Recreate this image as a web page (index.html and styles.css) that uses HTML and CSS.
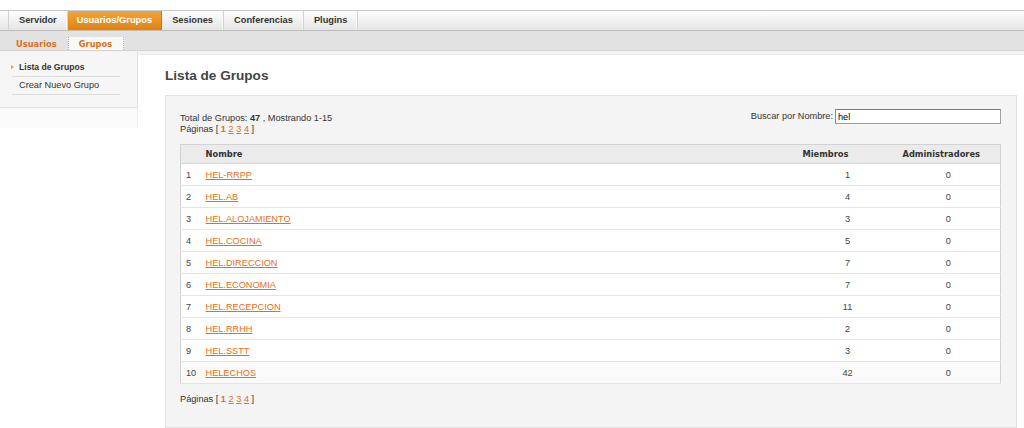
FILE: index.html
```html
<!DOCTYPE html>
<html lang="es">
<head>
<meta charset="utf-8">
<title>Lista de Grupos</title>
<link rel="stylesheet" href="styles.css">
</head>
<body>
<nav class="topnav">
  <a class="tab first">Servidor</a>
  <a class="tab active">Usuarios/Grupos</a>
  <a class="tab">Sesiones</a>
  <a class="tab">Conferencias</a>
  <a class="tab">Plugins</a>
</nav>
<nav class="subnav">
  <a class="subtab">Usuarios</a>
  <a class="subtab active">Grupos</a>
</nav>
<div class="layout">
  <aside class="side">
    <div class="sidebox">
      <ul class="sidemenu">
        <li class="current">Lista de Grupos</li>
        <li>Crear Nuevo Grupo</li>
      </ul>
    </div>
    <div class="sidefoot"></div>
  </aside>
  <main class="main">
    <h1 class="title">Lista de Grupos</h1>
    <div class="panel">
      <div class="toprow">
        <div class="info">
          <div>Total de Grupos: <b>47</b> , Mostrando 1-15</div>
          <div>Páginas [ <b class="cur">1</b> <a class="lnk">2</a> <a class="lnk">3</a> <a class="lnk">4</a> ]</div>
        </div>
        <form class="search">
          <label for="q">Buscar por Nombre:</label>
          <input id="q" type="text" value="hel">
        </form>
      </div>
      <table class="grid">
        <colgroup>
          <col class="c1"><col class="c2"><col class="c3"><col class="c4">
        </colgroup>
        <thead>
          <tr><th></th><th>Nombre</th><th class="mem">Miembros</th><th class="adm">Administradores</th></tr>
        </thead>
        <tbody>
          <tr><td>1</td><td><a class="lnk">HEL-RRPP</a></td><td class="mem">1</td><td class="adm">0</td></tr>
          <tr><td>2</td><td><a class="lnk">HEL.AB</a></td><td class="mem">4</td><td class="adm">0</td></tr>
          <tr><td>3</td><td><a class="lnk">HEL.ALOJAMIENTO</a></td><td class="mem">3</td><td class="adm">0</td></tr>
          <tr><td>4</td><td><a class="lnk">HEL.COCINA</a></td><td class="mem">5</td><td class="adm">0</td></tr>
          <tr><td>5</td><td><a class="lnk">HEL.DIRECCION</a></td><td class="mem">7</td><td class="adm">0</td></tr>
          <tr><td>6</td><td><a class="lnk">HEL.ECONOMIA</a></td><td class="mem">7</td><td class="adm">0</td></tr>
          <tr><td>7</td><td><a class="lnk">HEL.RECEPCION</a></td><td class="mem">11</td><td class="adm">0</td></tr>
          <tr><td>8</td><td><a class="lnk">HEL.RRHH</a></td><td class="mem">2</td><td class="adm">0</td></tr>
          <tr><td>9</td><td><a class="lnk">HEL.SSTT</a></td><td class="mem">3</td><td class="adm">0</td></tr>
          <tr class="last"><td>10</td><td><a class="lnk">HELECHOS</a></td><td class="mem">42</td><td class="adm">0</td></tr>
        </tbody>
      </table>
      <div class="pages">Páginas [ <b class="cur">1</b> <a class="lnk">2</a> <a class="lnk">3</a> <a class="lnk">4</a> ]</div>
    </div>
  </main>
</div>
</body>
</html>
```

FILE: styles.css
```css
html, body {
  margin: 0;
}
body {
  padding-top: 10px;
  background: #fff;
  font-family: "Liberation Sans", Arial, sans-serif;
  font-size: 9.2px;
  color: #333;
}

/* top navigation */
.topnav {
  display: flex;
  height: 19px;
  padding-left: 8px;
  border-top: 1px solid #cacaca;
  border-bottom: 1px solid #bcbcbc;
  background: linear-gradient(#fefefe, #e5e5e5);
}
.tab {
  display: block;
  padding: 0 10px;
  line-height: 19px;
  font-size: 9.3px;
  font-weight: bold;
  color: #333;
  border-right: 1px solid #d3d3d3;
  box-shadow: inset -1px 0 0 #f8f8f8;
}
.tab.first {
  border-left: 1px solid #d3d3d3;
}
.tab.active {
  padding: 0 9px;
  color: #fff;
  background: linear-gradient(#f3a43c, #df8311);
  border-right-color: #c9760f;
  box-shadow: none;
}

/* sub navigation */
.subnav {
  display: flex;
  align-items: flex-end;
  height: 19px;
  padding-left: 6px;
  background: #e2e2e2;
  border-bottom: 1px solid #d3d3d3;
}
.subtab {
  display: block;
  height: 13px;
  line-height: 15px;
  padding: 0 11px 0 10px;
  font-family: "DejaVu Sans", Verdana, sans-serif;
  font-size: 8.3px;
  font-weight: bold;
  color: #d8701c;
}
.subtab + .subtab {
  border-left: 1px dotted #a8a8a8;
}
.subtab.active {
  background: #f8f8f8;
  border-right: 1px dotted #b8b8b8;
}

/* layout */
.layout {
  display: grid;
  grid-template-columns: 138px 1fr;
  align-items: start;
  background: linear-gradient(#f3f3f3 0 3px, #fff 3px);
}

/* sidebar */
.side {
  margin-top: 1px;
}
.sidebox {
  padding: 7px 0 12px 12px;
  background: #f6f6f6;
  border-right: 1px solid #e2e2e2;
  border-bottom: 1px solid #e2e2e2;
}
.sidemenu {
  list-style: none;
  margin: 0;
  padding: 0;
  width: 108px;
}
.sidemenu li {
  position: relative;
  height: 17px;
  line-height: 17px;
  padding-left: 7px;
  border-bottom: 1px solid #dddddd;
  color: #333;
}
.sidemenu li.current {
  font-size: 8.6px;
  font-weight: bold;
}
.sidemenu li.current::before {
  content: "";
  position: absolute;
  left: -1px;
  top: 6px;
  border-left: 3px solid #efa02e;
  border-top: 2.5px solid transparent;
  border-bottom: 2.5px solid transparent;
}
.sidefoot {
  height: 20px;
  background: #fafafa;
  border-right: 1px solid #efefef;
}

/* main */
.main {
  margin-top: 3px;
  padding: 13px 7px 0 26px;
  background: #fff;
  border-top: 1px solid #e8e8e8;
  border-left: 1px solid transparent;
}
.title {
  margin: 0 0 11px;
  font-size: 13.6px;
  line-height: 16px;
  font-weight: bold;
  color: #444;
}
.panel {
  padding: 13px 15px 22px 14px;
  background: #f4f4f4;
  border: 1px solid #e2e2e2;
}
.toprow {
  display: flex;
  justify-content: space-between;
  align-items: flex-start;
  margin-bottom: 9px;
}
.info {
  padding-top: 4px;
  line-height: 11px;
}
.search {
  display: flex;
  align-items: center;
  gap: 2px;
  margin: 0;
}
.search label {
  line-height: 11px;
}
.search input {
  box-sizing: border-box;
  width: 166px;
  height: 15px;
  margin: 0;
  padding: 0 2px;
  border: 1px solid #a0a0a0;
  border-top-color: #7a7a7a;
  border-left-color: #8a8a8a;
  background: #fff;
  font-family: "Liberation Sans", Arial, sans-serif;
  font-size: 9.2px;
  color: #000;
}
.lnk {
  color: #e2701d;
  text-decoration: underline;
}
.cur {
  color: #e2701d;
  font-weight: bold;
}

/* table */
.grid {
  width: 100%;
  border-collapse: collapse;
  table-layout: fixed;
  border: 1px solid #d2d2d2;
  background: #fff;
}
.grid col.c1 { width: 20px; }
.grid col.c3 { width: 98px; }
.grid col.c4 { width: 104px; }
.grid th {
  height: 18px;
  padding: 0 0 0 5px;
  background: #ebebeb;
  border-bottom: 1px solid #d6d6d6;
  text-align: left;
  font-family: "DejaVu Sans", Verdana, sans-serif;
  font-size: 8.3px;
  font-weight: bold;
  color: #333;
}
.grid td {
  height: 21px;
  padding: 0 0 0 5px;
  border-bottom: 1px solid #e4e4e4;
  color: #444;
}
.grid th.mem {
  text-align: right;
  padding: 0 48px 0 0;
}
.grid td.mem {
  text-align: center;
  padding: 0;
}
.grid th.adm {
  padding-left: 6px;
}
.grid td.adm {
  text-align: center;
  padding: 0;
}
.grid tr.last td {
  background: #fafafa;
}
.pages {
  margin-top: 10px;
  line-height: 11px;
}
```
